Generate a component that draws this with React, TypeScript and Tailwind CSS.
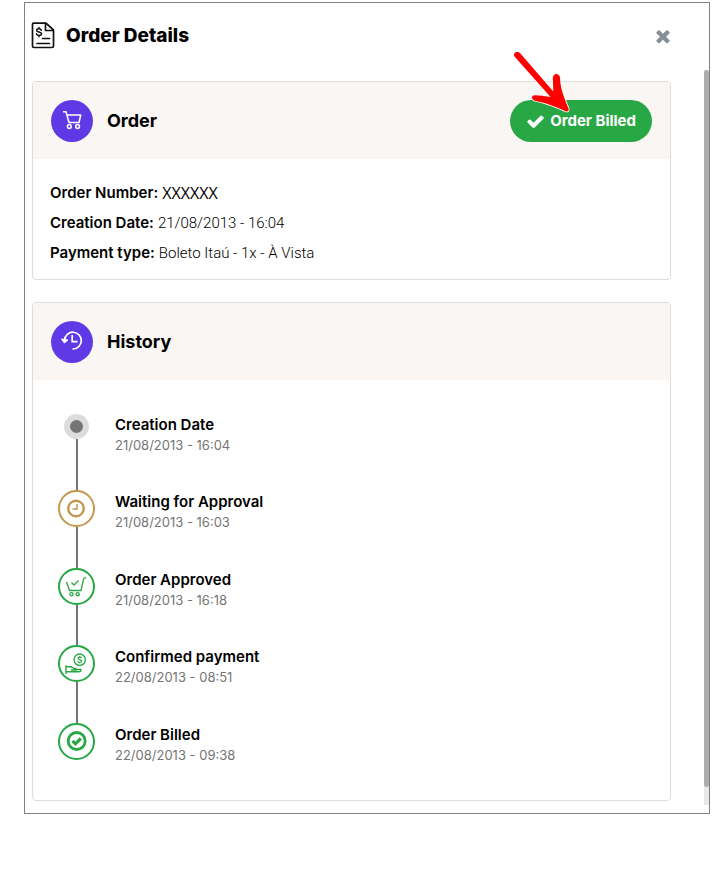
import type { ReactNode } from "react";

type Tone = "start" | "pending" | "done";

interface HistoryEvent {
  title: string;
  date: string;
  tone: Tone;
  icon?: ReactNode;
}

function InvoiceIcon() {
  return (
    <svg width="24" height="28" viewBox="0 1 24 28" fill="none" stroke="#111" strokeWidth="1.7" strokeLinejoin="round" strokeLinecap="round" aria-hidden="true">
      <path d="M2.5 2.2H15L22.5 9V25Q22.5 26.5 21 26.5H3Q1.5 26.5 1.5 25V3.500Q1.5 2.2 2.5 2.2Z" />
      <path d="M14.500 2.500V9.500H22" />
      <path d="M11.500 17.500H18.500M6 22.500H18.500" />
      <path d="M10.300 9.300C9.800 7.300 5.700 7.400 5.700 9.400C5.700 11.500 10.500 10.500 10.500 12.800C10.500 15 6 15 5.500 12.800M8 6.500V7.700M8 14.500V15.800" strokeWidth="1.500" />
    </svg>
  );
}

function CloseIcon() {
  return (
    <svg width="20" height="20" viewBox="0 0 1792 1792" fill="currentColor" aria-hidden="true">
      <path d="M1490 1322q0 40-28 68l-136 136q-28 28-68 28t-68-28l-294-294-294 294q-28 28-68 28t-68-28l-136-136q-28-28-28-68t28-68l294-294-294-294q-28-28-28-68t28-68l136-136q28-28 68-28t68 28l294 294 294-294q28-28 68-28t68 28l136 136q28 28 28 68t-28 68l-294 294 294 294q28 28 28 68z" />
    </svg>
  );
}

function CheckIcon() {
  return (
    <svg width="19" height="19" viewBox="0 0 1792 1792" fill="currentColor" aria-hidden="true">
      <path d="M1671 566q0 40-28 68l-724 724-136 136q-28 28-68 28t-68-28l-136-136-362-362q-28-28-28-68t28-68l136-136q28-28 68-28t68 28l294 295 656-657q28-28 68-28t68 28l136 136q28 28 28 68z" />
    </svg>
  );
}

function CartIcon() {
  return (
    <svg width="42" height="42" viewBox="0 0 42 42" fill="none" stroke="#fff" strokeWidth="1.500" strokeLinejoin="round" aria-hidden="true">
      <path d="M12 11.700H15L18 22.500H28L29.700 15H16" />
      <circle cx="18.300" cy="26.500" r="1.900" />
      <circle cx="26.600" cy="26.500" r="1.900" />
    </svg>
  );
}

function HistoryIcon() {
  return (
    <svg width="42" height="42" viewBox="0 0 42 42" fill="none" stroke="#fff" strokeWidth="1.700" aria-hidden="true">
      <path d="M13.500 19A8.400 8.400 0 1 1 21.500 28" />
      <path d="M21.200 14V20.700H26.500" />
      <path d="M10.500 18L17 19L13.300 22Z" fill="#fff" strokeWidth="1" strokeLinejoin="round" />
    </svg>
  );
}

function ClockIcon() {
  return (
    <svg className="shrink-0" width="37" height="37" viewBox="0 0 37 37" fill="none" stroke="#c3984f" aria-hidden="true">
      <circle cx="18" cy="18.500" r="7.800" strokeWidth="2.400" />
      <path d="M19 14V19H14.500" strokeWidth="1.500" />
    </svg>
  );
}

function CartApprovedIcon() {
  return (
    <svg className="shrink-0" width="37" height="37" viewBox="0 0 37 37" fill="none" stroke="#28a745" strokeWidth="1.300" aria-hidden="true">
      <path d="M8.500 14L11.500 22.500H23L25.500 11.500Q25.800 9.700 28 9.700" />
      <path d="M13.500 14.500L16 17L20.500 12.500" />
      <circle cx="13.500" cy="26.300" r="1.600" />
      <circle cx="19.700" cy="26.300" r="1.600" />
    </svg>
  );
}

function PaymentIcon() {
  return (
    <svg className="shrink-0" width="37" height="37" viewBox="0 0 37 37" fill="none" stroke="#28a745" strokeWidth="1.400" strokeLinejoin="round" aria-hidden="true">
      <circle cx="21.700" cy="14.700" r="5.700" />
      <path d="M23.800 13C23.200 11.700 19.900 11.700 19.900 13.300C19.900 15 23.700 14.200 23.700 16.100C23.700 17.800 20 17.600 19.500 16.300M21.800 11V12.200M21.800 17.200V18.500" strokeWidth="1.200" />
      <path d="M8 20.200V29M8 21.700H13L16 23.500H18V25H13M18 24.500H23Q23.500 26.800 20.500 26.800H8" />
    </svg>
  );
}

function BilledIcon() {
  return (
    <svg className="shrink-0" width="37" height="37" viewBox="0 0 37 37" fill="none" stroke="#28a745" aria-hidden="true">
      <circle cx="18.700" cy="18" r="8.500" strokeWidth="2.800" />
      <path d="M14.500 17.800L17.500 20.800L22.800 15.500" strokeWidth="3.200" />
    </svg>
  );
}

function PointerArrow() {
  return (
    <svg className="pointer-events-none absolute -top-[52px] left-px" width="62" height="68" viewBox="510 48 62 68" fill="#fe0000" stroke="#fff" strokeWidth="1.500" paintOrder="stroke" strokeLinejoin="round" aria-hidden="true">
      <path d="M513.500 56.500C511.500 53 516 50.300 519 53L552.300 91.500L551.800 78C552 73 557.500 72.500 559 77C559.500 88 561 92 567.800 109Q568 112 565 111.500C555 107 547 103.500 533 100.500C530 99 530.500 95 534 95.300Q541 95.500 549.500 97Z" />
    </svg>
  );
}

const events: HistoryEvent[] = [
  { title: "Creation Date", date: "21/08/2013 - 16:04", tone: "start" },
  { title: "Waiting for Approval", date: "21/08/2013 - 16:03", tone: "pending", icon: <ClockIcon /> },
  { title: "Order Approved", date: "21/08/2013 - 16:18", tone: "done", icon: <CartApprovedIcon /> },
  { title: "Confirmed payment", date: "22/08/2013 - 08:51", tone: "done", icon: <PaymentIcon /> },
  { title: "Order Billed", date: "22/08/2013 - 09:38", tone: "done", icon: <BilledIcon /> },
];

const toneClass: Record<Tone, string> = {
  start: "mt-px size-[25px] border-6 border-[#dcdcdc] bg-[#757575]",
  pending: "size-[37px] border-2 border-[#c3984f] bg-white",
  done: "size-[37px] border-2 border-[#28a745] bg-white",
};

function Card({ icon, title, action, children }: { icon: ReactNode; title: string; action?: ReactNode; children: ReactNode }) {
  return (
    <section className="rounded-[4px] border border-[#dcdddd]">
      <header className="flex h-[77px] items-center justify-between rounded-t-[3px] bg-[#faf6f4] px-[18px]">
        <div className="flex items-center gap-[14px]">
          <span className="flex size-[42px] items-center justify-center rounded-full bg-[#6039e6]">{icon}</span>
          <h2 className="text-[18px] leading-6 font-bold">{title}</h2>
        </div>
        {action}
      </header>
      {children}
    </section>
  );
}

export default function App() {
  return (
    <main className="pt-[2px] pr-[2px] pb-[69px] pl-6 font-['Inter','Liberation_Sans',sans-serif] text-black">
      <div className="border border-[#808080] bg-white pb-2">
        <header className="flex h-[67px] items-center justify-between pr-[36px] pb-[2px] pl-[6px]">
          <div className="flex items-center gap-[11px]">
            <InvoiceIcon />
            <h1 className="text-[19px] leading-6 font-extrabold">Order Details</h1>
          </div>
          <button type="button" aria-label="Close" className="text-[#868e96]">
            <CloseIcon />
          </button>
        </header>
        <div className="flex">
          <div className="flex min-w-0 flex-1 flex-col gap-[22px] pt-[11px] pr-[33px] pb-1 pl-[7px]">
            <Card
              icon={<CartIcon />}
              title="Order"
              action={
                <div className="relative">
                  <button type="button" className="flex h-[42px] items-center gap-[5px] rounded-full bg-[#28a745] px-4 pt-[2px] text-[15px] font-bold text-white">
                    <CheckIcon />
                    Order Billed
                  </button>
                  <PointerArrow />
                </div>
              }
            >
              <dl className="px-[17px] pt-[19px] pb-[11px] text-[15px] leading-[30px]">
                <div className="flex gap-1">
                  <dt className="font-semibold">Order Number:</dt>
                  <dd className="font-['Open_Sans',sans-serif] text-[16px]">XXXXXX</dd>
                </div>
                <div className="flex gap-1">
                  <dt className="font-semibold">Creation Date:</dt>
                  <dd className="font-['Roboto',sans-serif] font-light">21/08/2013 - 16:04</dd>
                </div>
                <div className="flex gap-1">
                  <dt className="font-semibold">Payment type:</dt>
                  <dd className="font-['Roboto',sans-serif] font-light">Boleto Itaú - 1x - À Vista</dd>
                </div>
              </dl>
            </Card>
            <Card icon={<HistoryIcon />} title="History">
              <ol className="mt-[33px] flex h-[387px] flex-col pl-[25px]">
                {events.map((event, index) => (
                  <li key={event.title} className="flex flex-1 gap-5">
                    <div className="flex w-[37px] flex-col items-center">
                      <span className={"flex shrink-0 items-center justify-center rounded-full " + toneClass[event.tone]}>{event.icon}</span>
                      {index < events.length - 1 && <span className="w-[2px] flex-1 bg-[#757575]" />}
                    </div>
                    <div className="pt-[2px]">
                      <h3 className="text-[15px] leading-5 font-semibold">{event.title}</h3>
                      <p className="text-[13px] leading-5 text-[#757575]">{event.date}</p>
                    </div>
                  </li>
                ))}
              </ol>
            </Card>
          </div>
          <div className="w-[5px] bg-[#e8e8e8] pb-[18px]">
            <div className="h-full rounded-full bg-[#adadad]" />
          </div>
        </div>
      </div>
    </main>
  );
}
